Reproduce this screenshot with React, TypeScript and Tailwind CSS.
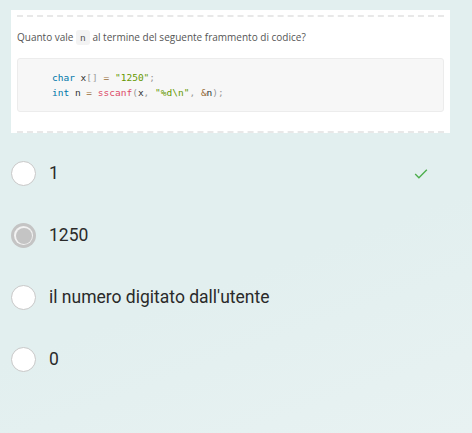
const options = [
  { label: '1', selected: false, correct: true },
  { label: '1250', selected: true, correct: false },
  { label: "il numero digitato dall'utente", selected: false, correct: false },
  { label: '0', selected: false, correct: false },
]

function Radio({ selected }: { selected: boolean }) {
  if (selected) {
    return (
      <span className="flex h-[25px] w-[25px] shrink-0 items-center justify-center rounded-full bg-[#c4c4c4]">
        <span className="flex h-[19px] w-[19px] items-center justify-center rounded-full bg-[#f2f2f2]">
          <span className="h-[16px] w-[16px] rounded-full bg-[#c4c4c4]" />
        </span>
      </span>
    )
  }
  return <span className="h-[25px] w-[25px] shrink-0 rounded-full border border-[#c8c8c8] bg-white" />
}

export default function App() {
  return (
    <div className="h-[433px] w-[472px] overflow-hidden bg-[linear-gradient(160deg,#e2efef_60%,#e8f2f2)] pt-[10px]">
      <div className="mx-[11px] w-[439px] bg-white px-[6px] pt-[5px]">
        <div className="border-t-2 border-dashed border-[#e8e8e8]" />
        <p className="mt-[12px] text-[10px] leading-[16px] text-[#555] [font-family:'Open_Sans',sans-serif]">
          Quanto vale{' '}
          <code className="rounded-[3px] bg-[#f3f3f3] px-[4px] py-[2px] text-[9.5px] text-[#555] [font-family:'DejaVu_Sans_Mono',monospace]">
            n
          </code>{' '}
          al termine del seguente frammento di codice?
        </p>
        <pre className="mt-[12px] rounded-[3px] border border-[#ececec] bg-[#f7f7f7] py-[11px] pl-[34px] text-[9.5px] leading-[15px] text-[#333] [font-family:'DejaVu_Sans_Mono',monospace]">
          <span className="text-[#0077aa]">char</span> x<span className="text-[#999]">[</span>
          <span className="text-[#999]">]</span> <span className="text-[#9a6e3a]">=</span>{' '}
          <span className="text-[#669900]">"1250"</span>
          <span className="text-[#999]">;</span>
          {'\n'}
          <span className="text-[#0077aa]">int</span> n <span className="text-[#9a6e3a]">=</span>{' '}
          <span className="text-[#dd4a68]">sscanf</span>
          <span className="text-[#999]">(</span>x<span className="text-[#999]">,</span>{' '}
          <span className="text-[#669900]">"%d\n"</span>
          <span className="text-[#999]">,</span> <span className="text-[#9a6e3a]">&amp;</span>n
          <span className="text-[#999]">)</span>
          <span className="text-[#999]">;</span>
        </pre>
        <div className="mt-[19px] border-b-2 border-dashed border-[#e8e8e8]" />
      </div>

      <div className="mt-[28px] flex flex-col gap-[37px] pl-[11px] pr-[44px]">
        {options.map((o) => (
          <div key={o.label} className="flex h-[25px] items-center">
            <Radio selected={o.selected} />
            <span className="ml-[13px] flex-1 text-[17.5px] text-[#2a2a2a] [font-family:Roboto,sans-serif]">
              {o.label}
            </span>
            {o.correct && (
              <svg viewBox="0 0 16 12" className="h-[10px] w-[14px]" fill="none" stroke="#4cae4c" strokeWidth={1.6}>
                <path d="M1 6l4.5 4.5L15 1" />
              </svg>
            )}
          </div>
        ))}
      </div>
    </div>
  )
}
